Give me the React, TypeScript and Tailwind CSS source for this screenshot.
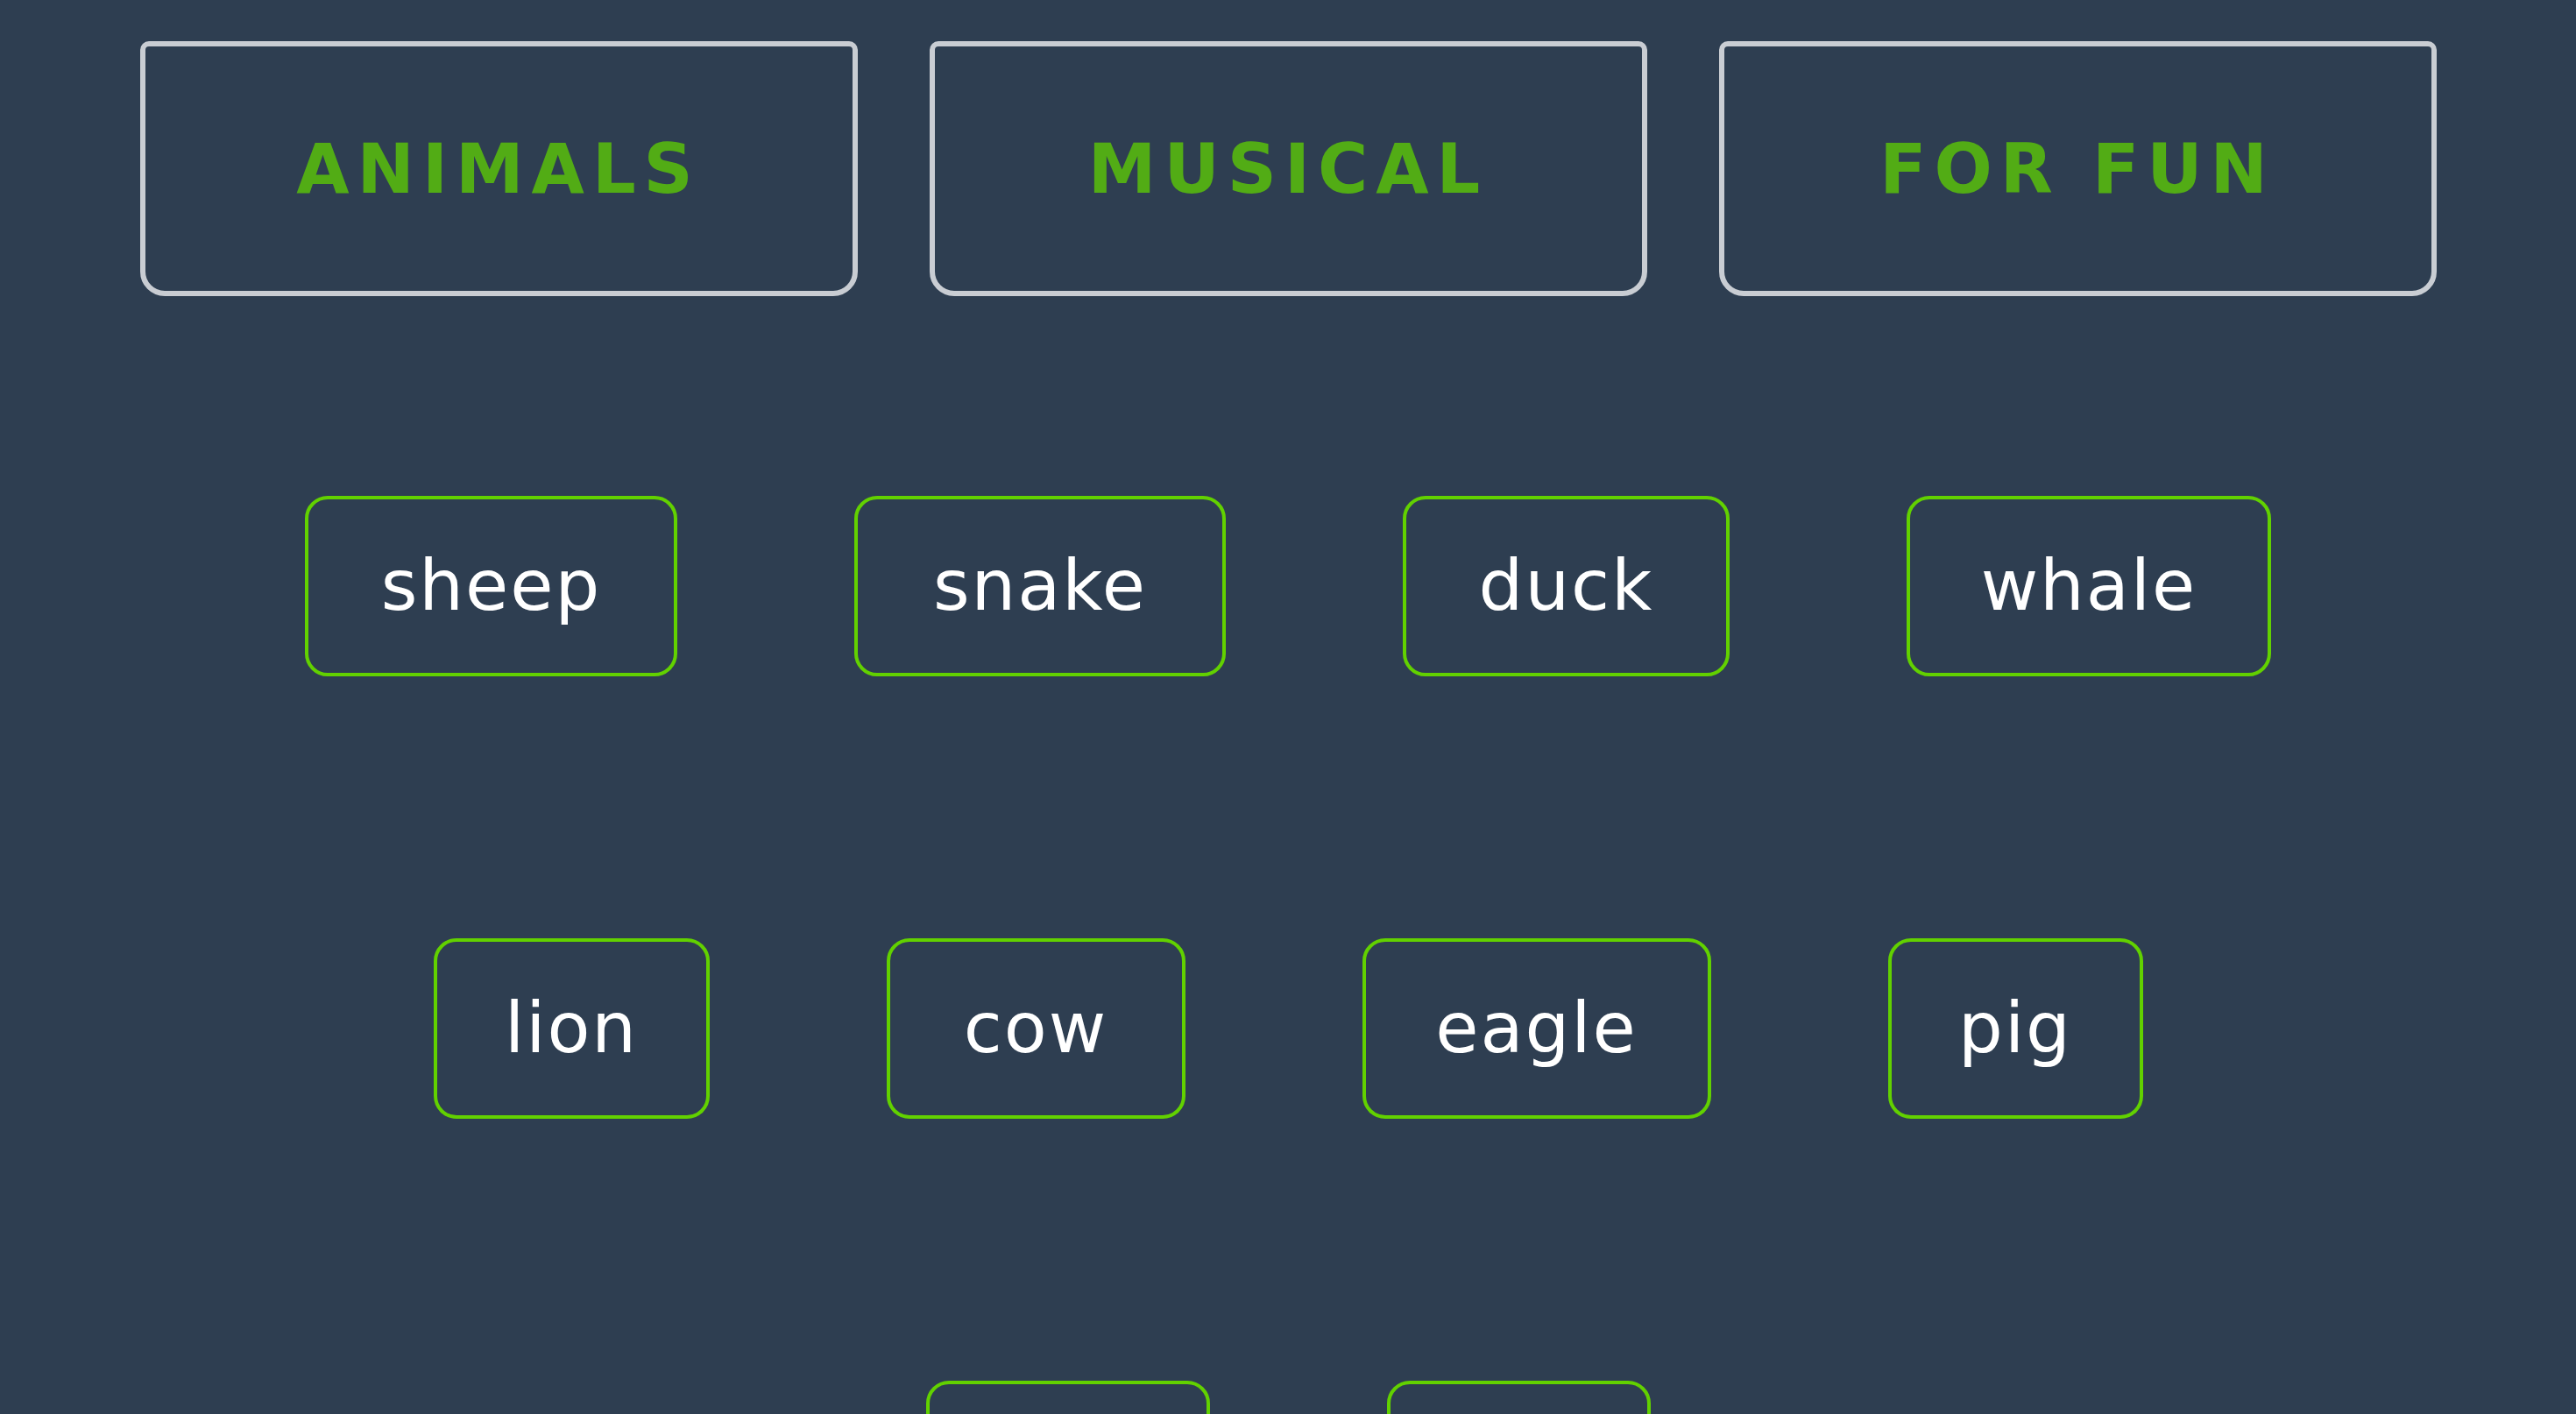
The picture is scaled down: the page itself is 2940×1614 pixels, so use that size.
const categories = ["ANIMALS", "MUSICAL", "FOR FUN"];

const rows = [
  [
    { name: "sheep", w: "w-[425px]" },
    { name: "snake", w: "w-[424px]" },
    { name: "duck", w: "w-[373px]" },
    { name: "whale", w: "w-[416px]" },
  ],
  [
    { name: "lion", w: "w-[315px]" },
    { name: "cow", w: "w-[341px]" },
    { name: "eagle", w: "w-[398px]" },
    { name: "pig", w: "w-[291px]" },
  ],
  [
    { name: "dog", w: "w-[324px]" },
    { name: "cat", w: "w-[301px]" },
  ],
];

export default function App() {
  return (
    <main className="min-h-screen bg-[#2e3e51] pt-[47px] pb-[150px] font-['DejaVu_Sans',sans-serif]">
      {/* Categories */}
      <section className="flex justify-center gap-[82px]">
        {categories.map((c) => (
          <button
            key={c}
            className="w-[819px] h-[291px] flex items-center justify-center border-[6px] border-[#c9cdd3] rounded-t-[10px] rounded-b-[28px] text-[78px] font-bold tracking-[9px] leading-none text-[#52ac15]"
          >
            {c}
          </button>
        ))}
      </section>

      {/* Words */}
      <section className="mt-[228px] flex flex-col gap-[299px]">
        {rows.map((row, i) => (
          <div key={i} className="flex justify-center gap-[202px]">
            {row.map((item) => (
              <button
                key={item.name}
                className={`${item.w} h-[206px] flex items-center justify-center border-4 border-[#62d100] rounded-[26px] text-white text-[80px] leading-none tracking-[2px]`}
              >
                {item.name}
              </button>
            ))}
          </div>
        ))}
      </section>
    </main>
  );
}
